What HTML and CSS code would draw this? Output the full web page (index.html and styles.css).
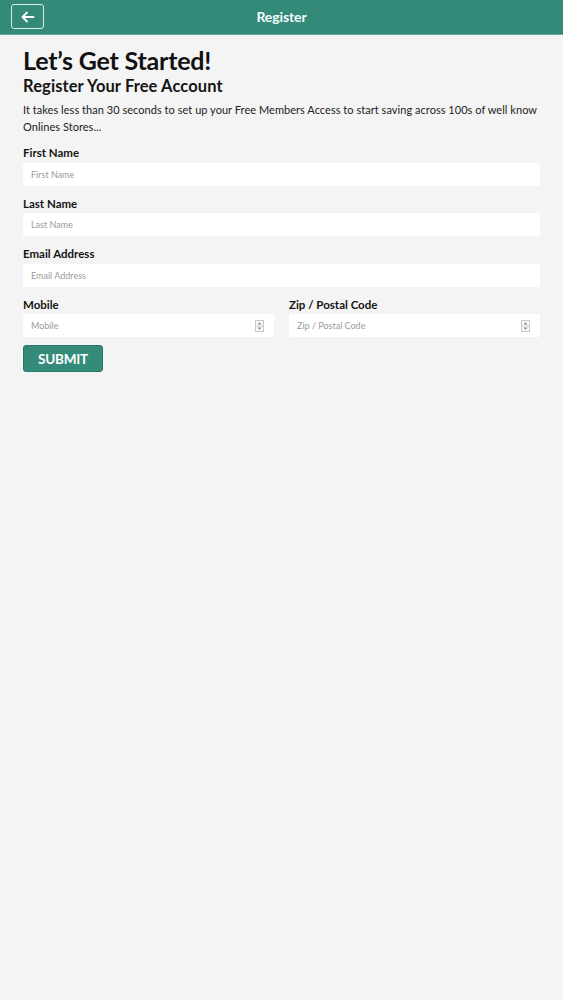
FILE: index.html
```html
<!DOCTYPE html>
<html lang="en">
<head>
<meta charset="utf-8">
<title>Register</title>
<link rel="stylesheet" href="styles.css">
</head>
<body>
<header class="topbar">
  <button class="back-btn" aria-label="Back">
    <svg width="14" height="12" viewBox="0 0 14 12"><path d="M6 1.5 L1.5 6 L6 10.5 M1.8 6 H12.5" fill="none" stroke="#fff" stroke-width="1.8" stroke-linecap="round" stroke-linejoin="round"/></svg>
  </button>
  <h1 class="topbar-title">Register</h1>
  <span class="topbar-spacer"></span>
</header>
<main class="content">
  <h2 class="title">Let’s Get Started!</h2>
  <h3 class="subtitle">Register Your Free Account</h3>
  <p class="intro">It takes less than 30 seconds to set up your Free Members Access to start saving across 100s of well know Onlines Stores...</p>
  <form class="form">
    <div class="field">
      <label class="label">First Name</label>
      <div class="input-box"><input class="input" type="text" placeholder="First Name"></div>
    </div>
    <div class="field">
      <label class="label">Last Name</label>
      <div class="input-box"><input class="input" type="text" placeholder="Last Name"></div>
    </div>
    <div class="field">
      <label class="label">Email Address</label>
      <div class="input-box"><input class="input" type="text" placeholder="Email Address"></div>
    </div>
    <div class="row">
      <div class="field field-tight">
        <label class="label">Mobile</label>
        <div class="input-box"><input class="input" type="text" placeholder="Mobile">
          <svg class="spin" width="9" height="12" viewBox="0 0 9 12"><rect x="0.5" y="0.5" width="8" height="11" fill="#fafafa" stroke="#c8c8c8"/><line x1="0.5" y1="6" x2="8.5" y2="6" stroke="#d4d4d4"/><path d="M4.5 2.2 L6.5 4.6 H2.5 Z M4.5 9.8 L6.5 7.4 H2.5 Z" fill="#8a8a8a"/></svg>
        </div>
      </div>
      <div class="field field-tight">
        <label class="label">Zip / Postal Code</label>
        <div class="input-box"><input class="input" type="text" placeholder="Zip / Postal Code">
          <svg class="spin" width="9" height="12" viewBox="0 0 9 12"><rect x="0.5" y="0.5" width="8" height="11" fill="#fafafa" stroke="#c8c8c8"/><line x1="0.5" y1="6" x2="8.5" y2="6" stroke="#d4d4d4"/><path d="M4.5 2.2 L6.5 4.6 H2.5 Z M4.5 9.8 L6.5 7.4 H2.5 Z" fill="#8a8a8a"/></svg>
        </div>
      </div>
    </div>
    <button class="submit" type="button">SUBMIT</button>
  </form>
</main>
</body>
</html>
```

FILE: styles.css
```css
* { box-sizing: border-box; }
html, body { margin: 0; padding: 0; }
body {
  background: #f4f4f4;
  font-family: Lato, "Open Sans", Arial, sans-serif;
  color: #151515;
  min-height: 1000px;
}
.topbar {
  height: 35px;
  background: #348a79;
  border-bottom: 1px solid #62ab9c;
  display: flex;
  align-items: center;
  padding: 0 11px;
}
.back-btn {
  width: 33px;
  height: 25px;
  border: 1px solid #d8efe9;
  border-radius: 3px;
  background: transparent;
  display: flex;
  align-items: center;
  justify-content: center;
  padding: 0;
  margin-top: -1px;
}
.topbar-title {
  flex: 1;
  margin: 0 0 2px;
  text-align: center;
  color: #f4fbf9;
  font-size: 14px;
  font-weight: 700;
  letter-spacing: -0.1px;
}
.topbar-spacer { width: 33px; }
.content {
  padding: 10px 23px 0;
}
.title {
  margin: 0;
  font-size: 25px;
  line-height: 30px;
  font-weight: 700;
  color: #111;
  letter-spacing: -0.2px;
}
.subtitle {
  margin: 0;
  font-size: 16.5px;
  line-height: 22px;
  font-weight: 700;
  color: #151515;
  letter-spacing: 0.1px;
}
.intro {
  margin: 4px 0 10px;
  font-size: 11px;
  line-height: 17px;
  color: #222;
  letter-spacing: 0.04px;
}
.form { display: block; }
.field { margin-bottom: 10px; }
.field-tight { margin-bottom: 8px; }
.label {
  display: block;
  font-size: 11.5px;
  line-height: 16px;
  font-weight: 700;
  color: #151515;
  margin-bottom: 1.6px;
}
.input-box {
  height: 23px;
  background: #fff;
  border-radius: 2px;
  display: flex;
  align-items: center;
  padding: 0 10px 0 8px;
}
.input {
  flex: 1;
  min-width: 0;
  border: 0;
  outline: 0;
  background: transparent;
  font-family: inherit;
  font-size: 9px;
  padding: 0;
  color: #333;
}
.input::placeholder { color: #9a9a9a; }
.spin { flex: none; }
.row {
  display: grid;
  grid-template-columns: 1fr 1fr;
  column-gap: 15px;
}
.submit {
  width: 80px;
  height: 27px;
  background: #358b7a;
  border: 1px solid #2b7868;
  border-radius: 3px;
  color: #fff;
  font-family: inherit;
  font-size: 13.5px;
  font-weight: 700;
  padding: 0;
  letter-spacing: -0.2px;
}
```
